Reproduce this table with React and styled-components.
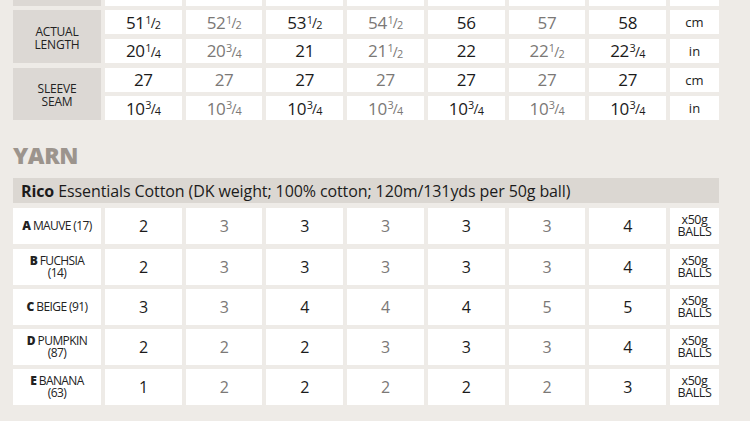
import React from 'react';
import styled, { createGlobalStyle } from 'styled-components';

const GlobalStyle = createGlobalStyle`
   html, body {
      margin: 0;
      padding: 0;
      background: #eeebe7;
      font-family: 'Open Sans', 'Liberation Sans', sans-serif;
      overflow: hidden;
   }
`;

const Page = styled.div`
   width: 706px;
   padding-left: 13px;
   height: 421px;
   overflow: hidden;
`;

const SizeTable = styled.div`
   display: grid;
   grid-template-columns: 88px repeat(7, 1fr) 49px;
   grid-auto-rows: 24px;
   column-gap: 4px;
   row-gap: 4.67px;
   margin-top: -47px;
`;

const GroupLabel = styled.div`
   grid-row: span 2;
   background: #dcd8d4;
   display: flex;
   align-items: center;
   justify-content: center;
   text-align: center;
   font-size: 12px;
   line-height: 13px;
   letter-spacing: -0.2px;
   color: #222;
   padding-top: 2px;
   box-sizing: border-box;
`;

const Value = styled.div`
   background: #fff;
   display: flex;
   align-items: center;
   justify-content: center;
   font-size: ${props => props.size || 17}px;
   color: ${props => (props.muted ? '#7b7876' : '#1b1b1b')};
   letter-spacing: -0.3px;
`;

const Frac = styled.span`
   display: inline-flex;
   align-items: flex-start;
   height: 0.74em;
   margin-left: 0.5px;
   line-height: 1;
`;

const Num = styled.span`
   font-size: 0.64em;
   line-height: 1;
   margin-top: -0.14em;
`;

const Slash = styled.span`
   font-size: 0.8em;
   line-height: 1;
   margin: 0 -0.5px;
`;

const Den = styled.span`
   font-size: 0.64em;
   line-height: 1;
   align-self: flex-end;
   margin-bottom: -0.2em;
`;

const Unit = styled.div`
   background: #fff;
   display: flex;
   align-items: center;
   justify-content: center;
   font-size: 13px;
   color: #222;
`;

const Heading = styled.h2`
   margin: 17px 0 0;
   height: 41px;
   font-size: 23px;
   line-height: 36px;
   font-weight: 800;
   letter-spacing: -0.4px;
   color: #9c948d;
`;

const YarnBar = styled.div`
   height: 25px;
   background: #dbd7d2;
   display: flex;
   align-items: center;
   padding-left: 8px;
   font-size: 16px;
   letter-spacing: -0.1px;
   color: #1b1b1b;
   white-space: nowrap;

   b {
      font-weight: 700;
   }
`;

const YarnTable = styled.div`
   display: grid;
   grid-template-columns: 88px repeat(7, 1fr) 49px;
   grid-auto-rows: 36px;
   column-gap: 4px;
   row-gap: 4.25px;
   margin-top: 5px;
`;

const Shade = styled.div`
   background: #fff;
   display: flex;
   flex-direction: column;
   align-items: center;
   justify-content: center;
   text-align: center;
   font-size: 12px;
   line-height: 12px;
   letter-spacing: -0.6px;
   color: #222;

   b {
      font-weight: 800;
   }
`;

const Balls = styled.div`
   background: #fff;
   display: flex;
   flex-direction: column;
   align-items: center;
   justify-content: center;
   font-size: 12.5px;
   line-height: 12px;
   letter-spacing: -0.4px;
   color: #222;
`;

const FRACTIONS = { '½': ['1', '2'], '¼': ['1', '4'], '¾': ['3', '4'] };

const Number = ({ text }) => {
   const last = text.slice(-1);
   if (!FRACTIONS[last]) return text;
   const [n, d] = FRACTIONS[last];
   return (
      <>
         {text.slice(0, -1)}
         <Frac>
            <Num>{n}</Num>
            <Slash>/</Slash>
            <Den>{d}</Den>
         </Frac>
      </>
   );
};

const sizeGroups = [
   {
      label: ['ACTUAL', 'CHEST'],
      rows: [
         { unit: 'cm', values: ['102', '107', '112', '117', '122', '127', '132'] },
         { unit: 'in', values: ['40¼', '42¼', '44¼', '46¼', '48¼', '50¼', '52¼'] },
      ],
   },
   {
      label: ['ACTUAL', 'LENGTH'],
      rows: [
         { unit: 'cm', values: ['51½', '52½', '53½', '54½', '56', '57', '58'] },
         { unit: 'in', values: ['20¼', '20¾', '21', '21½', '22', '22½', '22¾'] },
      ],
   },
   {
      label: ['SLEEVE', 'SEAM'],
      rows: [
         { unit: 'cm', values: ['27', '27', '27', '27', '27', '27', '27'] },
         { unit: 'in', values: ['10¾', '10¾', '10¾', '10¾', '10¾', '10¾', '10¾'] },
      ],
   },
];

const yarns = [
   { letter: 'A', name: 'MAUVE', code: '(17)', oneLine: true, balls: [2, 3, 3, 3, 3, 3, 4] },
   { letter: 'B', name: 'FUCHSIA', code: '(14)', balls: [2, 3, 3, 3, 3, 3, 4] },
   { letter: 'C', name: 'BEIGE', code: '(91)', oneLine: true, balls: [3, 3, 4, 4, 4, 5, 5] },
   { letter: 'D', name: 'PUMPKIN', code: '(87)', balls: [2, 2, 2, 3, 3, 3, 4] },
   { letter: 'E', name: 'BANANA', code: '(63)', balls: [1, 2, 2, 2, 2, 2, 3] },
];

const renderSizeGroup = group => {
   const cells = [
      <GroupLabel key={group.label.join()}>
         {group.label[0]}
         <br />
         {group.label[1]}
      </GroupLabel>,
   ];
   group.rows.forEach((row, r) => {
      row.values.forEach((v, i) => {
         cells.push(
            <Value key={`${group.label[1]}-${r}-${i}`} muted={i % 2 === 1}>
               <Number text={v} />
            </Value>
         );
      });
      cells.push(<Unit key={`${group.label[1]}-${r}-u`}>{row.unit}</Unit>);
   });
   return cells;
};

export default function App() {
   return (
      <Page>
         <GlobalStyle />
         <SizeTable>{sizeGroups.map(renderSizeGroup)}</SizeTable>
         <Heading>YARN</Heading>
         <YarnBar>
            <b>Rico</b>&nbsp;Essentials Cotton (DK weight; 100% cotton; 120m/131yds per 50g ball)
         </YarnBar>
         <YarnTable>
            {yarns.map(yarn => [
               <Shade key={yarn.letter}>
                  {yarn.oneLine ? (
                     <span>
                        <b>{yarn.letter}</b> {yarn.name} {yarn.code}
                     </span>
                  ) : (
                     <>
                        <span>
                           <b>{yarn.letter}</b> {yarn.name}
                        </span>
                        <span>{yarn.code}</span>
                     </>
                  )}
               </Shade>,
               ...yarn.balls.map((n, i) => (
                  <Value key={`${yarn.letter}-${i}`} size={16} muted={i % 2 === 1}>
                     {n}
                  </Value>
               )),
               <Balls key={`${yarn.letter}-balls`}>
                  <span>x50g</span>
                  <span>BALLS</span>
               </Balls>,
            ])}
         </YarnTable>
      </Page>
   );
}
